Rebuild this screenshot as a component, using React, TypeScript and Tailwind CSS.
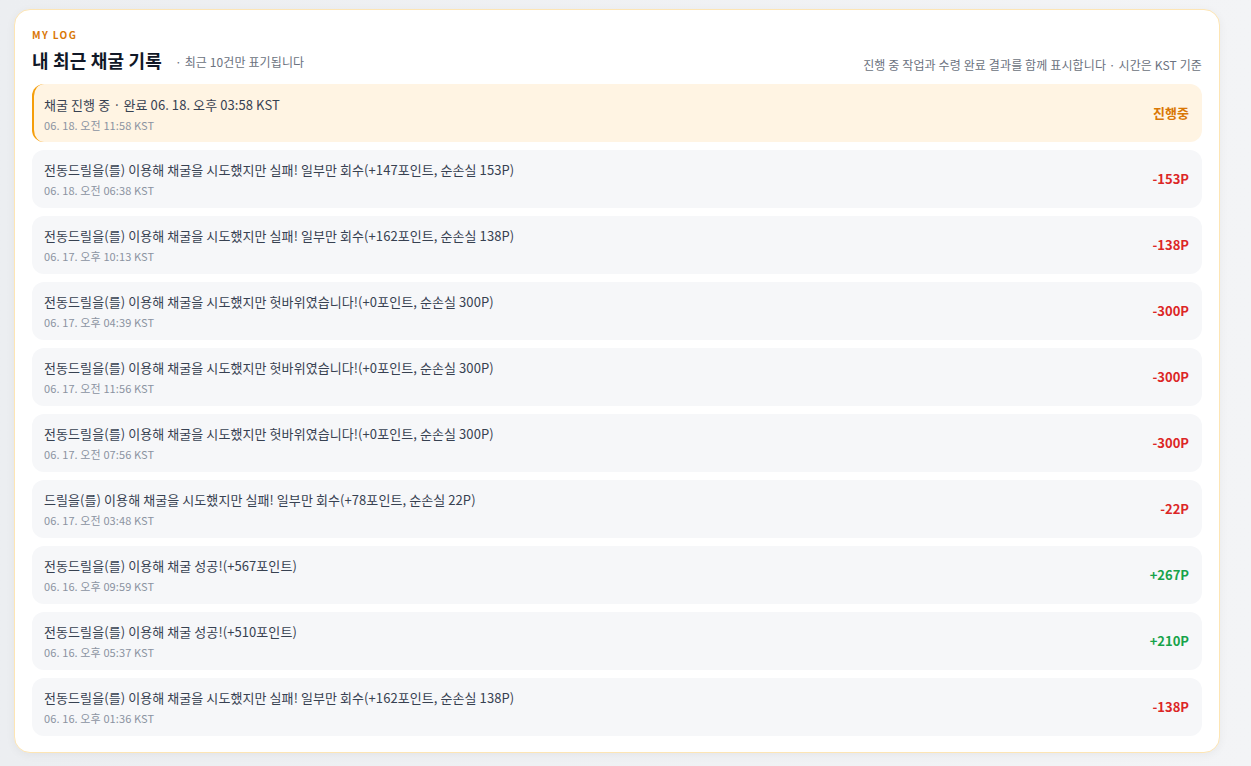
const rows = [
  { text: '전동드릴을(를) 이용해 채굴을 시도했지만 실패! 일부만 회수(+147포인트, 순손실 153P)', date: '06. 18. 오전 06:38 KST', amt: '-153P', up: false },
  { text: '전동드릴을(를) 이용해 채굴을 시도했지만 실패! 일부만 회수(+162포인트, 순손실 138P)', date: '06. 17. 오후 10:13 KST', amt: '-138P', up: false },
  { text: '전동드릴을(를) 이용해 채굴을 시도했지만 헛바위였습니다!(+0포인트, 순손실 300P)', date: '06. 17. 오후 04:39 KST', amt: '-300P', up: false },
  { text: '전동드릴을(를) 이용해 채굴을 시도했지만 헛바위였습니다!(+0포인트, 순손실 300P)', date: '06. 17. 오전 11:56 KST', amt: '-300P', up: false },
  { text: '전동드릴을(를) 이용해 채굴을 시도했지만 헛바위였습니다!(+0포인트, 순손실 300P)', date: '06. 17. 오전 07:56 KST', amt: '-300P', up: false },
  { text: '드릴을(를) 이용해 채굴을 시도했지만 실패! 일부만 회수(+78포인트, 순손실 22P)', date: '06. 17. 오전 03:48 KST', amt: '-22P', up: false },
  { text: '전동드릴을(를) 이용해 채굴 성공!(+567포인트)', date: '06. 16. 오후 09:59 KST', amt: '+267P', up: true },
  { text: '전동드릴을(를) 이용해 채굴 성공!(+510포인트)', date: '06. 16. 오후 05:37 KST', amt: '+210P', up: true },
  { text: '전동드릴을(를) 이용해 채굴을 시도했지만 실패! 일부만 회수(+162포인트, 순손실 138P)', date: '06. 16. 오후 01:36 KST', amt: '-138P', up: false },
];

export default function App() {
  return (
    <div
      className="min-h-[766px] bg-gradient-to-r from-[#eceef1] to-[#f3f4f6] pt-[9px] pb-[12px]"
      style={{ fontFamily: '"Noto Sans CJK KR", "Noto Sans", sans-serif' }}
    >
      <div className="ml-[14px] w-[1206px] rounded-[16px] border border-[#fde5b4] bg-white px-[17px] pt-[18px] pb-[16px] shadow-[0_2px_10px_rgba(15,23,42,0.05)]">
        {/* 헤더 */}
        <div className="text-[10px] font-bold leading-[14px] tracking-[0.14em] text-[#d97706]">MY LOG</div>
        <div className="mt-[5px] mb-[11px] flex items-end justify-between">
          <div className="flex items-center gap-[13px]">
            <h2 className="text-[18px] font-bold leading-[26px] tracking-[0.01em] text-[#111827]">내 최근 채굴 기록</h2>
            <span className="translate-y-[2px] text-[12px] leading-[26px] tracking-[0.01em] text-[#6b7280]">· 최근 10건만 표기됩니다</span>
          </div>
          <span className="translate-y-[1px] text-[12px] leading-[18px] tracking-[0.01em] text-[#6b7280]">진행 중 작업과 수령 완료 결과를 함께 표시합니다 · 시간은 KST 기준</span>
        </div>

        <div className="flex flex-col gap-[8px]">
          {/* 진행 중 항목 */}
          <div className="flex h-[58px] items-center justify-between rounded-[12px] border-l-2 border-[#f59e0b] bg-[#fff4e3] pl-[10px] pr-[13px]">
            <div className="flex flex-col pt-[2px]">
              <span className="text-[13px] leading-[20px] tracking-[0.006em] text-[#374151]">채굴 진행 중 · 완료 06. 18. 오후 03:58 KST</span>
              <span className="mt-[1px] text-[11px] leading-[18px] tracking-[0.01em] text-[#8b93a1]">06. 18. 오전 11:58 KST</span>
            </div>
            <span className="text-[13px] font-bold text-[#d97706]">진행중</span>
          </div>

          {rows.map((r, i) => (
            <div key={i} className="flex h-[58px] items-center justify-between rounded-[12px] bg-[#f6f7f9] pl-[12px] pr-[13px]">
              <div className="flex flex-col pt-[1px]">
                <span className="text-[13px] leading-[20px] tracking-[0.006em] text-[#374151]">{r.text}</span>
                <span className="mt-[1px] text-[11px] leading-[18px] tracking-[0.01em] text-[#8b93a1]">{r.date}</span>
              </div>
              <span className={r.up ? 'text-[13px] font-bold text-[#16a34a]' : 'text-[13px] font-bold text-[#dc2626]'}>{r.amt}</span>
            </div>
          ))}
        </div>
      </div>
    </div>
  );
}
